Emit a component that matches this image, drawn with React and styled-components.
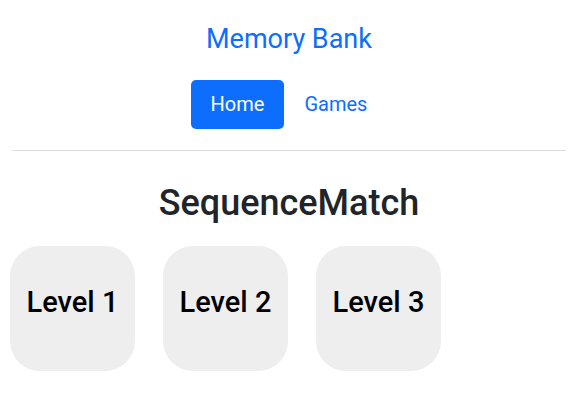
import React from "react";
import styled, { createGlobalStyle } from "styled-components";

const Global = createGlobalStyle`
  html, body { margin: 0; padding: 0; background: #fff; }
  body { font-family: Roboto, "Liberation Sans", sans-serif; color: #212529; }
  * { box-sizing: border-box; }
`;

const Page = styled.div`
  display: flex;
  flex-direction: column;
  align-items: stretch;
`;

const Header = styled.header`
  display: flex;
  flex-direction: column;
  align-items: center;
  padding-top: 23px;
`;

const Brand = styled.a`
  font-size: 27px;
  line-height: 1.2;
  font-weight: 400;
  color: #0d6efd;
  text-decoration: none;
`;

const Nav = styled.nav`
  display: flex;
  margin-top: 24.5px;
`;

const NavLink = styled.a`
  font-size: 20px;
  line-height: 30px;
  padding: 9.5px 20px;
  border-radius: 5px;
  text-decoration: none;
  color: ${(p) => (p.$active ? "#fff" : "#0d6efd")};
  background: ${(p) => (p.$active ? "#0d6efd" : "transparent")};
`;

const Divider = styled.hr`
  margin: 21px 12px 0;
  border: 0;
  border-top: 1px solid #dddddd;
`;

const Title = styled.h1`
  margin: 31px 0 0;
  text-align: center;
  font-size: 36px;
  line-height: 1.2;
  font-weight: 500;
  color: #212529;
`;

const Levels = styled.div`
  display: flex;
  gap: 28px;
  padding: 0 10px;
  margin-top: 21px;
`;

const LevelCard = styled.button`
  width: 125px;
  height: 125px;
  border: 0;
  border-radius: 30px;
  background: #eeeeee;
  display: flex;
  align-items: center;
  justify-content: center;
  padding: 0 0 12px;
  font-family: Roboto, "Liberation Sans", sans-serif;
  font-size: 29px;
  line-height: 1.2;
  font-weight: 500;
  color: #000;
  cursor: pointer;
`;

export default function App() {
  return (
    <Page>
      <Global />
      <Header>
        <Brand href="#">Memory Bank</Brand>
        <Nav>
          <NavLink href="#" $active>Home</NavLink>
          <NavLink href="#">Games</NavLink>
        </Nav>
      </Header>
      <Divider />
      <Title>SequenceMatch</Title>
      <Levels>
        {[1, 2, 3].map((n) => (
          <LevelCard key={n}>Level {n}</LevelCard>
        ))}
      </Levels>
    </Page>
  );
}
